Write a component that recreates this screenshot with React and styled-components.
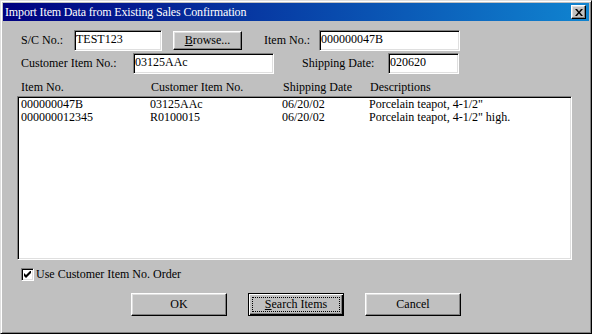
import React from 'react'
import styled, { createGlobalStyle } from 'styled-components'

const rows = [
  { item: '000000047B', cust: '03125AAc', date: '06/20/02', desc: 'Porcelain teapot, 4-1/2"' },
  { item: '000000012345', cust: 'R0100015', date: '06/20/02', desc: 'Porcelain teapot, 4-1/2" high.' },
]

const App = () => {
  return (
    <>
      <Global />
      <Window>
        <TitleBar>
          <span>Import Item Data from Existing Sales Confirmation</span>
          <CloseBtn>
            <svg width="8" height="7" viewBox="0 0 8 7">
              <path d="M0 0h2l2 2.5L6 0h2L5 3.5 8 7H6L4 4.5 2 7H0l3-3.5z" fill="#000" />
            </svg>
          </CloseBtn>
        </TitleBar>

        <Body>
          <FieldRow>
            <Label w={53}>S/C No.:</Label>
            <Field w={88} readOnly value="TEST123" />
            <Button w={69} h={19} ml={11}><u>B</u>rowse...</Button>
            <Label w={55} ml={22}>Item No.:</Label>
            <Field w={141} readOnly value="000000047B" />
          </FieldRow>
          <FieldRow top={2}>
            <Label w={112}>Customer Item No.:</Label>
            <Field w={141} readOnly value="03125AAc" />
            <Label w={86} ml={28}>Shipping Date:</Label>
            <Field w={71} readOnly value="020620" />
          </FieldRow>

          <Header>
            <span>Item No.</span>
            <span>Customer Item No.</span>
            <span>Shipping Date</span>
            <span>Descriptions</span>
          </Header>

          <ListBox>
            {rows.map((r) => (
              <ListRow key={r.item}>
                <span>{r.item}</span>
                <span>{r.cust}</span>
                <span>{r.date}</span>
                <span>{r.desc}</span>
              </ListRow>
            ))}
          </ListBox>

          <CheckRow>
            <CheckBox>
              <svg width="7" height="7" viewBox="0 0 7 7">
                <path d="M0 2L2 4L7 -1V2L2 7L0 5Z" fill="#000" />
              </svg>
            </CheckBox>
            <span>Use Customer Item No. Order</span>
          </CheckRow>

          <ButtonRow>
            <Button w={96} h={23}>OK</Button>
            <DefaultButton>
              <Focus><u>S</u>earch Items</Focus>
            </DefaultButton>
            <Button w={96} h={23}>Cancel</Button>
          </ButtonRow>
        </Body>
      </Window>
    </>
  )
}

export default App

const Global = createGlobalStyle`
  body {
    margin: 0;
    background: #c0c0c0;
    font-family: 'Liberation Serif', 'Times New Roman', serif;
    font-size: 12px;
    color: #000;
  }
`

const Window = styled.div`
  box-sizing: border-box;
  width: 592px;
  height: 334px;
  background: #c0c0c0;
  border: 1px solid;
  border-color: #dfdfdf #000 #000 #dfdfdf;
  box-shadow: inset 1px 1px #fff, inset -1px -1px #808080;
  padding: 2px;
  display: flex;
  flex-direction: column;
`

const TitleBar = styled.div`
  height: 18px;
  display: flex;
  align-items: center;
  justify-content: space-between;
  padding: 0 3px 0 2px;
  background: linear-gradient(90deg, #000080, #1084d0);
  color: #fff;
  font-size: 12px;
  letter-spacing: -0.15px;
  line-height: 18px;
`

const CloseBtn = styled.div`
  box-sizing: border-box;
  width: 15px;
  height: 14px;
  display: flex;
  align-items: center;
  justify-content: center;
  background: #c0c0c0;
  border: 1px solid;
  border-color: #fff #000 #000 #fff;
  box-shadow: inset -1px -1px #808080, inset 1px 1px #dfdfdf;
`

const Body = styled.div`
  flex: 1;
  padding: 9px 0 0 14px;
  display: flex;
  flex-direction: column;
`

const FieldRow = styled.div`
  display: flex;
  align-items: center;
  height: 21px;
  margin-top: ${(p) => p.top || 0}px;
  padding-left: 4px;
`

const Label = styled.span`
  width: ${(p) => p.w}px;
  margin-left: ${(p) => p.ml || 0}px;
  flex-shrink: 0;
  white-space: nowrap;
`

const Field = styled.input`
  box-sizing: border-box;
  width: ${(p) => p.w}px;
  height: 21px;
  margin: 0;
  padding: 0 1px 2px 1px;
  font-family: inherit;
  font-size: 12px;
  color: #000;
  background: #fff;
  border: 1px solid;
  border-color: #808080 #fff #fff #808080;
  box-shadow: inset 1px 1px #000, inset -1px -1px #dfdfdf;
  outline: none;
`

const Button = styled.div`
  box-sizing: border-box;
  width: ${(p) => p.w}px;
  height: ${(p) => p.h}px;
  margin-left: ${(p) => p.ml || 0}px;
  display: flex;
  align-items: center;
  justify-content: center;
  background: #c0c0c0;
  border: 1px solid;
  border-color: #fff #000 #000 #fff;
  box-shadow: inset -1px -1px #808080, inset 1px 1px #dfdfdf;
  u { text-decoration: underline; }
`

const DefaultButton = styled.div`
  box-sizing: border-box;
  width: 96px;
  height: 23px;
  border: 1px solid #000;
  background: #c0c0c0;
  box-shadow: inset 1px 1px #fff, inset -1px -1px #000, inset -2px -2px #808080;
  padding: 3px;
  display: flex;
`

const Focus = styled.div`
  flex: 1;
  display: flex;
  align-items: center;
  justify-content: center;
  border: 1px dotted #000;
`

const Header = styled.div`
  display: grid;
  grid-template-columns: 130px 132px 87px 1fr;
  height: 14px;
  line-height: 14px;
  margin-top: 6px;
  padding-left: 4px;
  white-space: nowrap;
`

const ListBox = styled.div`
  box-sizing: border-box;
  width: 555px;
  height: 164px;
  margin-top: 2px;
  background: #fff;
  border: 1px solid;
  border-color: #808080 #fff #fff #808080;
  box-shadow: inset 1px 1px #000, inset -1px -1px #dfdfdf;
  padding: 1px 0 0 3px;
`

const ListRow = styled.div`
  display: grid;
  grid-template-columns: 129px 132px 87px 1fr;
  height: 13px;
  line-height: 13px;
  white-space: nowrap;
`

const CheckRow = styled.div`
  display: flex;
  align-items: center;
  gap: 2px;
  height: 13px;
  line-height: 13px;
  margin-top: 8px;
  padding-left: 4px;
`

const CheckBox = styled.div`
  box-sizing: border-box;
  width: 13px;
  height: 13px;
  display: flex;
  align-items: center;
  justify-content: center;
  background: #fff;
  border: 1px solid;
  border-color: #808080 #fff #fff #808080;
  box-shadow: inset 1px 1px #000, inset -1px -1px #dfdfdf;
`

const ButtonRow = styled.div`
  display: flex;
  justify-content: center;
  gap: 21px;
  margin-top: 12px;
  margin-left: -14px;
`
